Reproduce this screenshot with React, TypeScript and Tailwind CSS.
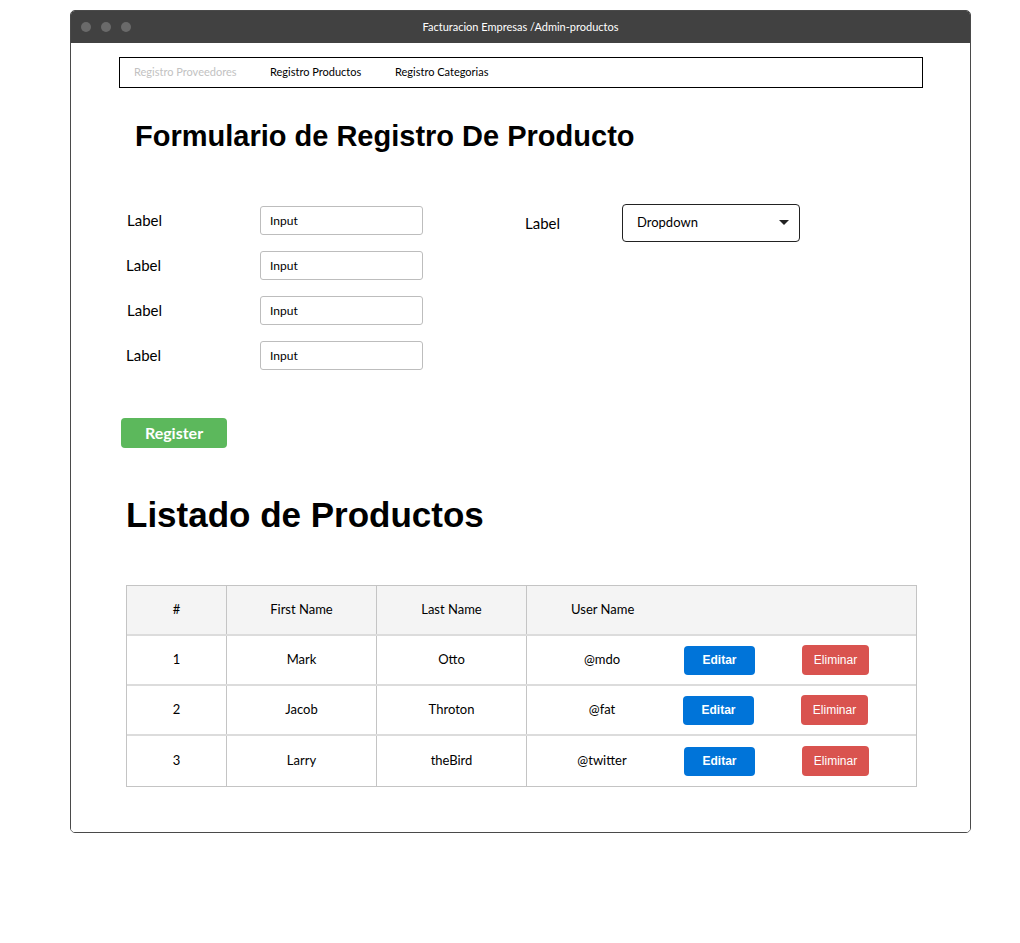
import React from "react";

const rows = [
  { n: "1", f: "Mark", l: "Otto", u: "@mdo" },
  { n: "2", f: "Jacob", l: "Throton", u: "@fat" },
  { n: "3", f: "Larry", l: "theBird", u: "@twitter" },
];

export default function App() {
  const sans = { fontFamily: "Lato, 'Noto Sans', sans-serif" };
  const arial = { fontFamily: "'Liberation Sans', Arial, sans-serif" };
  return (
    <div className="w-[1020px] h-[943px] bg-white pt-[10px] pl-[70px]" style={sans}>
      <div className="w-[901px] h-[823px] border border-[#4a4a4a] rounded-[5px] overflow-hidden flex flex-col">
        <div className="h-[32px] bg-[#414141] flex items-center relative shrink-0">
          <div className="flex gap-[10px] pl-[10px]">
            <span className="w-[10px] h-[10px] rounded-full bg-[#6a6a6a]" />
            <span className="w-[10px] h-[10px] rounded-full bg-[#6a6a6a]" />
            <span className="w-[10px] h-[10px] rounded-full bg-[#6a6a6a]" />
          </div>
          <div className="absolute inset-0 flex items-center justify-center text-white text-[11px]">
            Facturacion Empresas /Admin-productos
          </div>
        </div>
        <div className="flex-1 bg-white pt-[14px] pl-[48px]">
          <div className="w-[804px] h-[31px] border border-black flex items-center pl-[14px] text-[11px] text-black">
            <span className="text-[#c2c2c2] w-[136px]">Registro Proveedores</span>
            <span className="w-[125px]">Registro Productos</span>
            <span>Registro Categorias</span>
          </div>
          <h1 className="mt-[30px] ml-[16px] text-[29px] font-bold leading-[36px]" style={arial}>
            Formulario de Registro De Producto
          </h1>
          <div className="flex mt-[52px]">
            <div className="flex flex-col gap-[16px] w-[400px]">
              {[8, 7, 8, 7].map((ml, i) => (
                <div key={i} className="flex items-center h-[29px]">
                  <span className={`text-[15px] w-[133px] ${ml === 8 ? "ml-[8px]" : "ml-[7px]"}`}>Label</span>
                  <div className={`w-[163px] h-[29px] border border-[#bdbdbd] rounded-[3px] flex items-center pl-[9px] text-[12px] ${ml === 8 ? "" : "ml-px"}`}>
                    Input
                  </div>
                </div>
              ))}
            </div>
            <div className="flex items-center h-[38px] -mt-[2px] ml-[6px] self-start">
              <span className="text-[15px] w-[97px]">Label</span>
              <div className="w-[178px] h-[38px] border border-[#222] rounded-[4px] flex items-center justify-between pl-[14px] pr-[10px] text-[13px]">
                <span>Dropdown</span>
                <svg width="10" height="6" viewBox="0 0 10 6"><path d="M0 0 L10 0 L5 5 Z" fill="#222" /></svg>
              </div>
            </div>
          </div>
          <button className="mt-[48px] ml-[2px] w-[106px] h-[30px] rounded-[4px] bg-[#5cb85c] text-white font-bold text-[16px]">
            Register
          </button>
          <h2 className="mt-[46px] ml-[7px] text-[35px] font-bold leading-[42px]" style={arial}>
            Listado de Productos
          </h2>
          <div className="mt-[49px] ml-[7px] w-[791px] border border-[#c4c4c4] text-[13px]">
            <div className="flex h-[50px] bg-[#f4f4f4] border-b-2 border-[#dcdcdc]">
              <div className="w-[100px] border-r border-[#c4c4c4] flex items-center justify-center">#</div>
              <div className="w-[150px] border-r border-[#c4c4c4] flex items-center justify-center">First Name</div>
              <div className="w-[150px] border-r border-[#c4c4c4] flex items-center justify-center">Last Name</div>
              <div className="flex-1 flex items-center pl-[44px]">User Name</div>
            </div>
            {rows.map((r, i) => (
              <div key={i} className={`flex h-[50px] ${i < 2 ? "border-b-2 border-[#dcdcdc]" : ""}`}>
                <div className="w-[100px] border-r border-[#c4c4c4] flex items-center justify-center">{r.n}</div>
                <div className="w-[150px] border-r border-[#c4c4c4] flex items-center justify-center">{r.f}</div>
                <div className="w-[150px] border-r border-[#c4c4c4] flex items-center justify-center">{r.l}</div>
                <div className="flex-1 flex items-center">
                  <div className="w-[150px] text-center">{r.u}</div>
                  <button className={`${i === 1 ? "ml-[6px]" : "ml-[7px]"} w-[71px] h-[29px] rounded-[4px] bg-[#0074d9] text-white font-bold text-[12px]`} style={arial}>
                    Editar
                  </button>
                  <button className="ml-[47px] w-[67px] h-[30px] rounded-[4px] bg-[#d9534f] text-white text-[12px]" style={arial}>
                    Eliminar
                  </button>
                </div>
              </div>
            ))}
          </div>
        </div>
      </div>
    </div>
  );
}
